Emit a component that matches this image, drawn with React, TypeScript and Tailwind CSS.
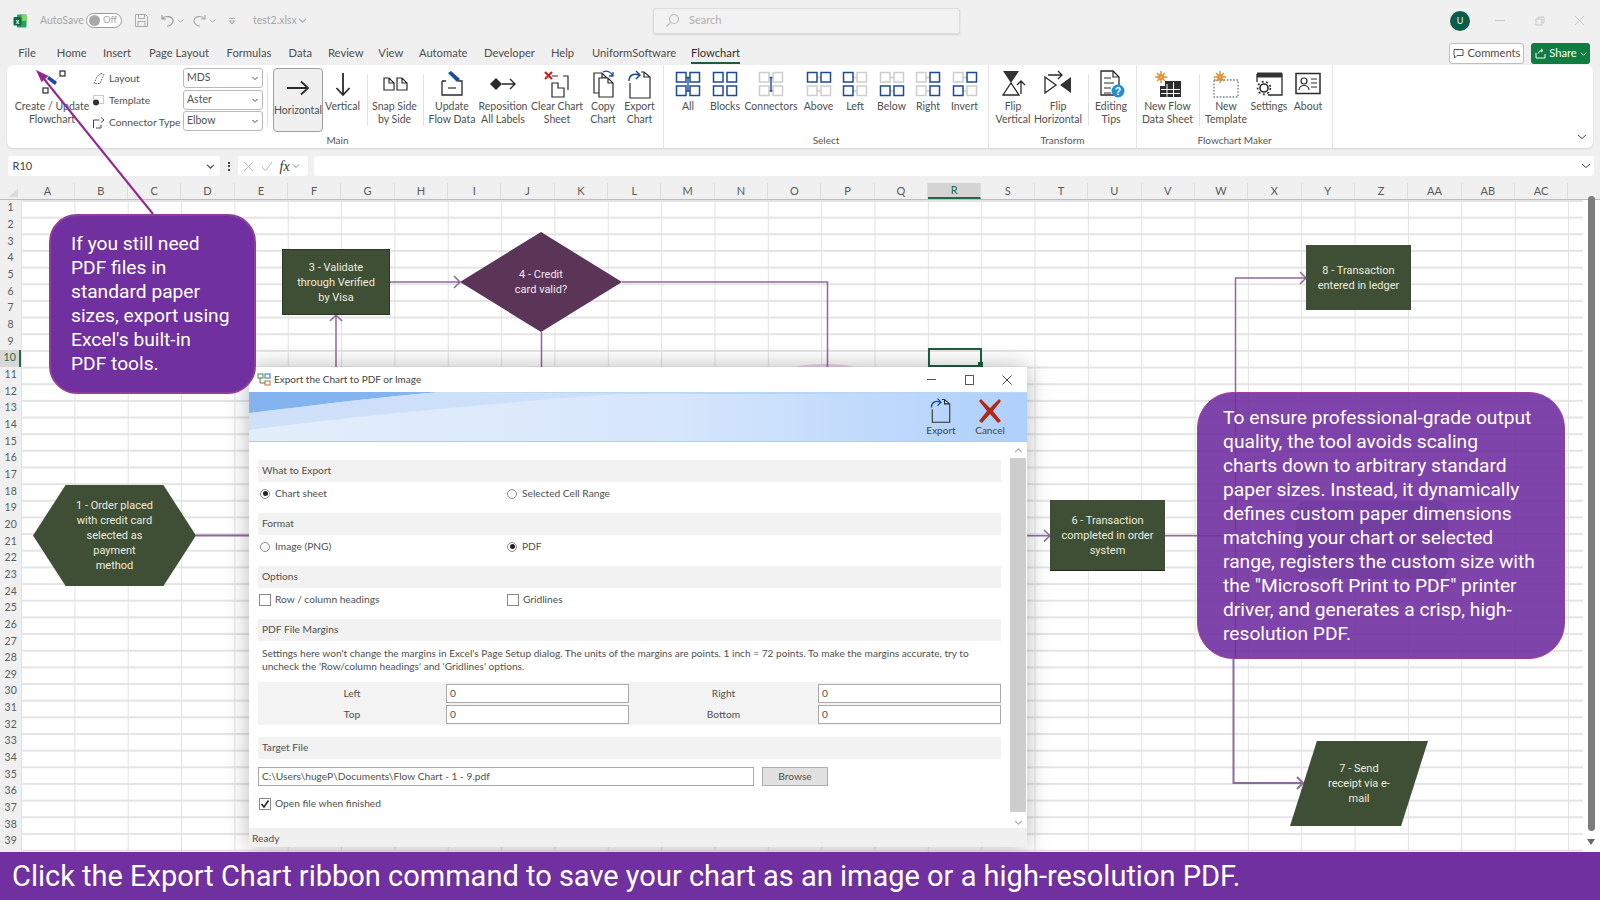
import React from "react";

const B = "#1e4a9a";
const G = "#cdcdcd";
const K = "#2a2a2a";

function Ico({ children, s = 32 }: { children: React.ReactNode; s?: number }) {
  return (
    <svg width={s} height={s} viewBox="0 0 32 32" fill="none" className="shrink-0">
      {children}
    </svg>
  );
}

function Sel({ q, h = B, v = "none" }: { q: string[]; h?: string; v?: string }) {
  const p: [number, number][] = [[4.5, 4.5], [18, 4.5], [4.5, 18], [18, 18]];
  return (
    <Ico>
      {h !== "none" && <path d="M14 9.5h4M14 23h4" stroke={h} strokeWidth="1.4" />}
      {v !== "none" && <path d="M16 9.5V23" stroke={v} strokeWidth="1.4" />}
      {p.map((c, i) => (
        <rect key={i} x={c[0]} y={c[1]} width="9.5" height="9.5" fill="#fff" stroke={q[i]} strokeWidth="1.5" />
      ))}
    </Ico>
  );
}

const Doc = ({ x = 0, y = 0, w = 14, h = 18 }: { x?: number; y?: number; w?: number; h?: number }) => (
  <path d={`M${x} ${y}h${w - 5}l5 5v${h - 5}h-${w}z M${x + w - 5} ${y}v5h5`} stroke={K} strokeWidth="1.2" fill="#fff" />
);

const Star = ({ x, y }: { x: number; y: number }) => (
  <g stroke="#e08a2c" strokeWidth="1.4">
    <path d={`M${x - 6} ${y}h12M${x} ${y - 6}v12M${x - 4} ${y - 4}l8 8M${x + 4} ${y - 4}l-8 8`} />
    <circle cx={x} cy={y} r="2" fill="#f3b04d" />
  </g>
);

const icons: Record<string, React.ReactNode> = {
  create: (
    <Ico>
      <rect x="24" y="3" width="5" height="5" stroke={K} strokeWidth="1.2" />
      <rect x="7" y="20" width="5" height="5" stroke={K} strokeWidth="1.2" />
      <path d="M12 20L24 8" stroke="#bbb" strokeDasharray="2 1" />
      <path d="M13 8l8 6-2 3-8-6z" fill={B} />
    </Ico>
  ),
  horizontal: (
    <Ico>
      <path d="M5 16h21M19 9.5l7 6.5-7 6.5" stroke={K} strokeWidth="1.8" />
    </Ico>
  ),
  vertical: (
    <Ico>
      <path d="M16 5v22M9.5 20l6.5 7 6.5-7" stroke={K} strokeWidth="1.8" />
    </Ico>
  ),
  snap: (
    <Ico>
      <Doc x={5} y={10} w={10} h={12} />
      <Doc x={18} y={10} w={10} h={12} />
    </Ico>
  ),
  update: (
    <Ico>
      <path d="M6 13v14h20V13h-4M6 13h4" stroke={K} strokeWidth="1.3" />
      <path d="M12 20h8" stroke={K} strokeWidth="1.2" />
      <path d="M12 5l3-2 9 8-3 3z" fill={B} />
    </Ico>
  ),
  repos: (
    <Ico>
      <path d="M3 16l6-6 6 6-6 6z" fill={K} />
      <path d="M15 16h13M23 11l5 5-5 5" stroke={K} strokeWidth="1.4" />
    </Ico>
  ),
  clear: (
    <Ico>
      <path d="M11 8h6M22 8h5v14M11 15v14h12v-9h-6v-5z" stroke={K} strokeWidth="1.2" />
      <path d="M4 4l7 7M11 4l-7 7" stroke="#c0281c" strokeWidth="2.2" />
    </Ico>
  ),
  copy: (
    <Ico>
      <Doc x={7} y={5} w={13} h={20} />
      <Doc x={12} y={10} w={14} h={19} />
      <path d="M16 4c4-2 8 0 10 4M26 4v4h-4" stroke={B} strokeWidth="1.3" />
    </Ico>
  ),
  exportc: (
    <Ico>
      <path d="M6 15v15h20V9l-6-5h-3M20 4v5h6" stroke={K} strokeWidth="1.2" />
      <path d="M5 13c0-6 5-8 10-6M12 3l4 4-4 4" stroke={B} strokeWidth="1.5" />
    </Ico>
  ),
  flipv: (
    <Ico>
      <path d="M6 3h16L14 15z" fill="#333" />
      <path d="M14 15l8 12H6z" stroke={K} strokeWidth="1.3" fill="#fff" />
      <path d="M24 26V13M20 17l4-4 4 4" stroke={K} strokeWidth="1.3" />
    </Ico>
  ),
  fliph: (
    <Ico>
      <path d="M3 9v16l11-8z" stroke={K} strokeWidth="1.3" fill="#fff" />
      <path d="M29 9v16l-11-8z" fill="#333" />
      <path d="M6 7h14M16 3l4 4-4 4" stroke={K} strokeWidth="1.3" />
    </Ico>
  ),
  tips: (
    <Ico>
      <path d="M6 3h12l6 6v18H6z" stroke={K} strokeWidth="1.3" fill="#fff" />
      <path d="M18 3v6h6M9 10h7M9 15h10M9 20h7M9 25h7" stroke={K} strokeWidth="1.2" />
      <circle cx="23" cy="23" r="6.5" fill="#1f8fd6" />
      <text x="23" y="27" textAnchor="middle" fontSize="10" fontWeight="700" fill="#fff" fontFamily="Liberation Sans">?</text>
    </Ico>
  ),
  newflow: (
    <Ico>
      <Star x={9} y={9} />
      <path d="M13 13h16v16H8V18h5z" fill="#2d2d2d" />
      <path d="M9 21.5h19M9 25.5h19M15 16v13M21.5 14v15" stroke="#fff" strokeWidth="1" />
    </Ico>
  ),
  newtemp: (
    <Ico>
      <rect x="4" y="12" width="24" height="17" stroke="#777" strokeWidth="1.3" strokeDasharray="1.6 1.6" />
      <Star x={10} y={9} />
    </Ico>
  ),
  settings: (
    <Ico>
      <path d="M4 6h25v21H15" stroke={K} strokeWidth="1.3" />
      <path d="M4 4.5h25v5H4z" fill="#333" />
      <path d="M4 6v8" stroke={K} strokeWidth="1.3" />
      <circle cx="11" cy="20" r="4" stroke={K} strokeWidth="1.6" />
      <circle cx="11" cy="20" r="6.4" stroke={K} strokeWidth="1.6" strokeDasharray="2 2.5" />
    </Ico>
  ),
  about: (
    <Ico>
      <rect x="4" y="5.5" width="24" height="20" stroke={K} strokeWidth="1.5" />
      <circle cx="12" cy="13" r="3" stroke={K} strokeWidth="1.2" />
      <path d="M7 22c0-6 10-6 10 0M19 11h6M19 15h6M19 19h6" stroke={K} strokeWidth="1.2" />
    </Ico>
  ),
};

function Btn({ w, lines, icon }: { w: string; lines: string[]; icon: string | React.ReactNode }) {
  return (
    <div className={`${w} flex flex-col items-center pt-[3px] shrink-0`}>
      <div className="h-[32px] flex items-center justify-center">{typeof icon === "string" ? icons[icon] : icon}</div>
      <div className="flex flex-col items-center text-[10.5px] leading-[13.4px] text-[#505050] whitespace-nowrap">
        {lines.map((l) => (
          <span key={l}>{l}</span>
        ))}
      </div>
    </div>
  );
}

const InnerSep = ({ cls }: { cls: string }) => <div className={`${cls} w-px h-[52px] mt-[9px] bg-[#e2e2e2] shrink-0`} />;

function Group({ cls, row = "", label, children }: { cls: string; row?: string; label: string; children: React.ReactNode }) {
  return (
    <div className={`${cls} flex flex-col shrink-0 border-r border-[#e4e4e4]`}>
      <div className={`${row} h-[67px] flex`}>{children}</div>
      <div className="h-[16px] flex items-center justify-center text-[10px] text-[#555]">{label}</div>
    </div>
  );
}

function Drop({ t }: { t: string }) {
  return (
    <div className="h-[20px] w-[80px] flex items-center justify-between border border-[#b9b9b9] rounded-[3px] bg-white pl-[3px] pr-[3px] text-[10.5px] text-[#505050]">
      <span>{t}</span>
      <svg width="8" height="8" viewBox="0 0 8 8"><path d="M1.5 3L4 5.5 6.5 3" stroke="#444" fill="none" /></svg>
    </div>
  );
}

const tabs: [string, string][] = [
  ["File", "w-[38.5px]"], ["Home", "w-[46.2px]"], ["Insert", "w-[46px]"], ["Page Layout", "w-[77.6px]"],
  ["Formulas", "w-[62px]"], ["Data", "w-[39.4px]"], ["Review", "w-[50.4px]"], ["View", "w-[40.6px]"],
  ["Automate", "w-[65px]"], ["Developer", "w-[67px]"], ["Help", "w-[41px]"], ["UniformSoftware", "w-[99px]"],
];

const cols = ["A","B","C","D","E","F","G","H","I","J","K","L","M","N","O","P","Q","R","S","T","U","V","W","X","Y","Z","AA","AB","AC"];
const rows = Array.from({ length: 39 }, (_, i) => i + 1);

function SectionHead({ t }: { t: string }) {
  return <div className="h-[22px] flex items-center pl-[4px] bg-[#f2f2f2] text-[10.2px] text-[#505050]">{t}</div>;
}

function Radio({ t, on, cls }: { t: string; on?: boolean; cls: string }) {
  return (
    <div className={`${cls} flex items-center gap-[5px] text-[10.2px] text-[#505050]`}>
      <span className="w-[10px] h-[10px] rounded-full border border-[#8a8a8a] flex items-center justify-center bg-white">
        {on && <span className="w-[5px] h-[5px] rounded-full bg-[#222]" />}
      </span>
      {t}
    </div>
  );
}

function Check({ t, on, cls }: { t: string; on?: boolean; cls: string }) {
  return (
    <div className={`${cls} flex items-center gap-[4px] text-[10.2px] text-[#505050]`}>
      <span className="w-[12px] h-[12px] border border-[#8a8a8a] flex items-center justify-center bg-white">
        {on && (
          <svg width="10" height="10" viewBox="0 0 10 10"><path d="M1.5 5l2.5 3L8.5 1.5" stroke="#222" strokeWidth="1.6" fill="none" /></svg>
        )}
      </span>
      {t}
    </div>
  );
}

const Input = ({ t }: { t: string }) => (
  <div className="h-[19px] border border-[#a9a9a9] bg-white pl-[3px] flex items-center text-[10.2px] text-[#505050]">{t}</div>
);

export default function App() {
  return (
    <div className="relative w-[1600px] h-[900px] overflow-hidden bg-[#f0f0f0] flex flex-col font-['Lato',sans-serif]">
      {/* title bar */}
      <div className="h-[41px] shrink-0 flex items-center text-[10.5px] text-[#a6a6a6]">
        <svg width="14" height="14" viewBox="0 0 14 14" className="ml-[13px]">
          <rect x="4" y="0.5" width="9.5" height="13" rx="1" fill="#21a366" />
          <rect x="8.5" y="0.5" width="5" height="6.5" fill="#7fd35b" />
          <rect x="0.5" y="3" width="8" height="8.5" rx="1" fill="#0f6b3a" />
          <text x="4.5" y="9.6" textAnchor="middle" fontSize="6.5" fontWeight="700" fill="#fff" fontFamily="Liberation Sans">x</text>
        </svg>
        <span className="ml-[13px] w-[46px]">AutoSave</span>
        <div className="w-[36px] h-[15px] rounded-full border border-[#9b9b9b] bg-white flex items-center pl-[2px] gap-[3px] text-[9.5px]">
          <span className="w-[11px] h-[11px] rounded-full bg-[#a9a9a9]" />
          Off
        </div>
        <svg width="15" height="15" viewBox="0 0 15 15" className="ml-[12px]" fill="none" stroke="#aaa">
          <path d="M1.5 1.5h10l2 2v10h-12zM4.5 1.5v4h6v-4M4 13.5v-5h7v5" />
        </svg>
        <svg width="17" height="15" viewBox="0 0 17 15" className="ml-[10px]" fill="none" stroke="#999" strokeWidth="1.2">
          <path d="M3 2v4h4M3 6c3-4 11-3 11 2 0 3-3 5-6 5" />
        </svg>
        <svg width="7" height="7" viewBox="0 0 8 8" className="ml-[1px]"><path d="M1 3l3 3 3-3" stroke="#aaa" fill="none" /></svg>
        <svg width="17" height="15" viewBox="0 0 17 15" className="ml-[7px]" fill="none" stroke="#aaa" strokeWidth="1.2">
          <path d="M14 2v4h-4M14 6C11 2 3 3 3 8c0 3 3 5 6 5" />
        </svg>
        <svg width="7" height="7" viewBox="0 0 8 8" className="ml-[1px]"><path d="M1 3l3 3 3-3" stroke="#aaa" fill="none" /></svg>
        <svg width="8" height="8" viewBox="0 0 8 8" className="ml-[12px]"><path d="M1 1.5h6M1.5 4l2.5 3 2.5-3z" stroke="#aaa" fill="none" /></svg>
        <span className="ml-[17px] w-[40px]">test2.xlsx</span>
        <svg width="9" height="9" viewBox="0 0 8 8" className="ml-[5px]"><path d="M1 2.5l3 3 3-3" stroke="#aaa" fill="none" /></svg>
        <div className="ml-[346px] w-[307px] h-[26px] border border-[#dcdcdc] rounded-[3px] bg-[#f2f2f2] shadow-[0_1px_2px_rgba(0,0,0,0.12)] flex items-center pl-[11px] gap-[9px] text-[11px] text-[#b0b0b0]">
          <svg width="15" height="15" viewBox="0 0 15 15" fill="none" stroke="#bbb" strokeWidth="1.2"><circle cx="9" cy="6" r="4.5" /><path d="M5.8 9.2L1.5 13.5" /></svg>
          Search
        </div>
        <div className="ml-[490px] w-[20px] h-[20px] rounded-full bg-[#0c5c4c] flex items-center justify-center text-[9px] text-[#dff]">U</div>
        <div className="ml-[25px] w-[10px] h-px bg-[#c8c8c8]" />
        <svg width="10" height="10" viewBox="0 0 10 10" className="ml-[30px]" fill="none" stroke="#c8c8c8"><path d="M1 3h6v6H1zM3 3V1h6v6H7" /></svg>
        <svg width="11" height="11" viewBox="0 0 11 11" className="ml-[29px]" stroke="#c8c8c8"><path d="M1 1l9 9M10 1l-9 9" /></svg>
      </div>

      {/* tabs row */}
      <div className="h-[24px] shrink-0 flex items-center pl-[18.3px] text-[11.2px] text-[#4e4e4e]">
        {tabs.map(([t, w]) => (
          <span key={t} className={`${w} shrink-0 whitespace-nowrap`}>{t}</span>
        ))}
        <span className="relative w-[49px] flex justify-center text-[#2f2f2f]">
          Flowchart
          <span className="absolute left-0 right-0 -bottom-[3px] h-[2px] bg-[#1f5c3d]" />
        </span>
        <div className="ml-[709.5px] w-[75px] h-[21px] border border-[#bdbdbd] rounded-[3px] bg-white flex items-center justify-center gap-[3px]">
          <svg width="11" height="11" viewBox="0 0 11 11" fill="none" stroke="#555"><path d="M1 1.5h9v6H4L1.5 10V7.5H1z" /></svg>
          Comments
        </div>
        <div className="ml-[7px] w-[59px] h-[21px] rounded-[3px] bg-[#107c41] text-white flex items-center justify-center gap-[3px]">
          <svg width="11" height="11" viewBox="0 0 11 11" fill="none" stroke="#fff"><path d="M1 5v5h9V6M3 5.5C4 3 6 2.5 7 2.5M6 .8l2 1.7-2 1.7" /></svg>
          Share
          <svg width="7" height="7" viewBox="0 0 8 8"><path d="M1 3l3 3 3-3" stroke="#fff" fill="none" /></svg>
        </div>
      </div>

      {/* ribbon */}
      <div className="h-[83px] shrink-0 ml-[7px] w-[1586px] rounded-[6px] bg-white shadow-[0_1px_2px_rgba(0,0,0,0.12)] flex pl-[5px] relative">
        <Group cls="w-[652px]" label="Main">
          <Btn w="w-[80px]" lines={["Create / Update", "Flowchart"]} icon="create" />
          <div className="w-[91px] shrink-0 flex flex-col pt-[5px] gap-[5px] text-[10.3px] text-[#505050]">
            <div className="h-[17px] flex items-center gap-[4px]">
              <svg width="13" height="13" viewBox="0 0 13 13" fill="none" stroke="#555" strokeDasharray="1.5 1.2"><path d="M9 1.5l3 1-4 9-6 0 3-7z" /></svg>
              Layout
            </div>
            <div className="h-[17px] flex items-center gap-[4px]">
              <svg width="13" height="13" viewBox="0 0 13 13" fill="none"><rect x="1.5" y="1.5" width="10" height="8" stroke="#999" strokeDasharray="1 1" /><circle cx="4" cy="8.5" r="3" fill="#333" /></svg>
              Template
            </div>
            <div className="h-[17px] flex items-center gap-[4px] whitespace-nowrap">
              <svg width="13" height="13" viewBox="0 0 13 13" fill="none" stroke="#444"><path d="M1.5 12V4h6M9 1.5l3 2.5-3 2.5M4 12h5V9" /></svg>
              Connector Type
            </div>
          </div>
          <div className="w-[80px] shrink-0 flex flex-col pt-[3px] gap-[1.5px]">
            <Drop t="MDS" />
            <Drop t="Aster" />
            <Drop t="Elbow" />
          </div>
          <InnerSep cls="ml-[4px]" />
          <div className="ml-[5px] w-[50px] h-[64px] mt-[3px] shrink-0 rounded-[4px] border border-[#9f9f9f] bg-[#f0f0f0]">
            <Btn w="w-[48px]" lines={["Horizontal"]} icon="horizontal" />
          </div>
          <Btn w="w-[39px]" lines={["Vertical"]} icon="vertical" />
          <InnerSep cls="ml-[5px]" />
          <Btn w="ml-[4px] w-[45px]" lines={["Snap Side", "by Side"]} icon="snap" />
          <InnerSep cls="ml-[6px]" />
          <Btn w="ml-[5px] w-[46px]" lines={["Update", "Flow Data"]} icon="update" />
          <Btn w="w-[56px]" lines={["Reposition", "All Labels"]} icon="repos" />
          <Btn w="w-[52px]" lines={["Clear Chart", "Sheet"]} icon="clear" />
          <Btn w="w-[40px]" lines={["Copy", "Chart"]} icon="copy" />
          <Btn w="w-[33px]" lines={["Export", "Chart"]} icon="exportc" />
        </Group>
        <Group cls="w-[325px]" row="pl-[6px]" label="Select">
          <Btn w="w-[36px]" lines={["All"]} icon={<Sel q={[B, B, B, B]} v={B} />} />
          <Btn w="w-[38px]" lines={["Blocks"]} icon={<Sel q={[B, B, B, B]} h="none" />} />
          <Btn w="w-[54px]" lines={["Connectors"]} icon={<Sel q={[G, G, G, G]} v={B} />} />
          <Btn w="w-[41px]" lines={["Above"]} icon={<Sel q={[B, B, G, G]} h={G} />} />
          <Btn w="w-[32px]" lines={["Left"]} icon={<Sel q={[B, G, B, G]} h={G} />} />
          <Btn w="w-[41px]" lines={["Below"]} icon={<Sel q={[G, G, B, B]} h={G} />} />
          <Btn w="w-[32px]" lines={["Right"]} icon={<Sel q={[G, B, G, B]} h={G} />} />
          <Btn w="w-[41px]" lines={["Invert"]} icon={<Sel q={[G, B, B, G]} h={G} />} />
        </Group>
        <Group cls="w-[148px]" label="Transform">
          <Btn w="w-[48px]" lines={["Flip", "Vertical"]} icon="flipv" />
          <Btn w="w-[42px]" lines={["Flip", "Horizontal"]} icon="fliph" />
          <InnerSep cls="ml-[9px]" />
          <Btn w="w-[44px]" lines={["Editing", "Tips"]} icon="tips" />
        </Group>
        <Group cls="w-[196px]" label="Flowchart Maker">
          <Btn w="w-[61px]" lines={["New Flow", "Data Sheet"]} icon="newflow" />
          <InnerSep cls="ml-px" />
          <Btn w="w-[52px]" lines={["New", "Template"]} icon="newtemp" />
          <Btn w="w-[34px]" lines={["Settings"]} icon="settings" />
          <Btn w="w-[44px]" lines={["About"]} icon="about" />
        </Group>
        <svg width="10" height="10" viewBox="0 0 10 10" className="absolute right-[6px] top-[67px]"><path d="M1 3l4 3.5L9 3" stroke="#444" fill="none" /></svg>
      </div>

      {/* formula bar */}
      <div className="mt-[8px] h-[20px] shrink-0 flex items-stretch pl-[7.6px] text-[11px] text-[#444]">
        <div className="w-[212px] bg-white rounded-[3px] flex items-center justify-between pl-[5px] pr-[5px]">
          R10
          <svg width="9" height="9" viewBox="0 0 8 8"><path d="M1 2.5l3 3 3-3" stroke="#444" fill="none" /></svg>
        </div>
        <div className="w-[18px] flex flex-col items-center justify-center gap-[1.5px]">
          <span className="w-[2px] h-[2px] bg-[#444]" />
          <span className="w-[2px] h-[2px] bg-[#444]" />
          <span className="w-[2px] h-[2px] bg-[#444]" />
        </div>
        <div className="w-[70px] bg-white rounded-[3px] flex items-center pl-[5px] gap-[7px]">
          <svg width="11" height="11" viewBox="0 0 11 11" stroke="#b9b9b9"><path d="M1 1l9 9M10 1l-9 9" /></svg>
          <svg width="12" height="11" viewBox="0 0 12 11" fill="none" stroke="#b9b9b9"><path d="M1 6l3.5 4L11 1" /></svg>
          <span className="font-['Liberation_Serif',serif] italic text-[14px] text-[#333]">fx</span>
          <svg width="8" height="8" viewBox="0 0 8 8" className="-ml-[5px]"><path d="M1 2.5l3 3 3-3" stroke="#888" fill="none" /></svg>
        </div>
        <div className="ml-[6px] w-[1280px] bg-white rounded-[3px] flex items-center justify-end pr-[3px]">
          <svg width="10" height="10" viewBox="0 0 10 10"><path d="M1 3l4 3.5L9 3" stroke="#444" fill="none" /></svg>
        </div>
      </div>

      {/* column headers */}
      <div className="mt-[7px] h-[17px] shrink-0 flex text-[11px] text-[#5a5a5a] border-b border-[#bdbdbd]">
        <div className="w-[21.3px] shrink-0 flex items-end justify-end pr-[3px] pb-[2px]">
          <span className="w-0 h-0 border-l-[9px] border-l-transparent border-b-[9px] border-b-[#dcdcdc]" />
        </div>
        {cols.map((c) => (
          <div
            key={c}
            className={`w-[53.35px] shrink-0 flex items-center justify-center border-r border-[#dedede] ${
              c === "R" ? "bg-[#d4d4d4] border-b-2 border-b-[#1f6b45] text-[#1f6b45]" : ""
            }`}
          >
            {c}
          </div>
        ))}
      </div>

      {/* sheet */}
      <div className="flex-1 min-h-0 flex">
        <div className="w-[21.3px] shrink-0 flex flex-col text-[10.5px] text-[#5a5a5a]">
          {rows.map((r) => (
            <div
              key={r}
              className={`h-[16.67px] shrink-0 flex items-center justify-center ${
                r === 10 ? "bg-[#d8d8d8] border-r-2 border-r-[#1f6b45] text-[#1f6b45]" : ""
              }`}
            >
              {r}
            </div>
          ))}
        </div>
        <div className="w-[1561.7px] shrink-0 bg-white bg-[linear-gradient(to_right,#e2e2e2_1px,transparent_1px),linear-gradient(to_bottom,#e4e4e4_1.5px,transparent_1.5px)] bg-[size:53.35px_16.67px]" />
        <div className="flex-1 bg-white flex flex-col items-center relative">
          <div className="mt-[-4px] w-[7px] h-[635px] rounded-full bg-[#7d7d7d]" />
          <span className="mt-[8px] w-0 h-0 border-l-[4px] border-r-[4px] border-t-[6px] border-l-transparent border-r-transparent border-t-[#666]" />
        </div>
      </div>

      {/* banner */}
      <div className="h-[48px] shrink-0 bg-[#7030a0] flex items-center pl-[12px] text-[29px] leading-none text-white font-['Roboto',sans-serif] z-10 relative">
        Click the Export Chart ribbon command to save your chart as an image or a high-resolution PDF.
      </div>

      {/* selected cell */}
      <div className="absolute left-[927.5px] top-[348px] w-[54px] h-[19px] border-2 border-[#1f5f3f]">
        <span className="absolute -right-[3px] -bottom-[2px] w-[5px] h-[5px] bg-[#1f5f3f]" />
      </div>

      {/* connectors */}
      <svg width="1600" height="900" viewBox="0 0 1600 900" className="absolute left-0 top-0 pointer-events-none" fill="none">
        <ellipse cx="825" cy="369" rx="32" ry="5" fill="#eed0ec" />
        <g stroke="#8e6a9c" strokeWidth="1.5">
          <path d="M390 282H460M454 276l6 6-6 6" />
          <path d="M336 367V315M330 321l6-6 6 6" />
          <path d="M541.5 332V367" />
          <path d="M622 282H827.5V367" />
          <path d="M196 535.5H249" strokeWidth="2" />
          <path d="M1027 535.7H1050M1044 530l6 5.7-6 5.7" />
          <path d="M1165 535.7H1235" />
          <path d="M1306 278H1235.5V659M1300 272l6 6-6 6" />
          <path d="M1233.5 659V783H1303M1297 777l6 6-6 6" strokeWidth="2" />
        </g>
      </svg>

      {/* flowchart nodes */}
      <div className="absolute left-[282px] top-[249px] w-[108px] h-[66px] bg-[#3f4f35] border border-[#2a3a22] flex items-center justify-center text-center text-[11px] leading-[15px] text-[#ececdf] font-['Roboto',sans-serif]">
        3 - Validate<br />through Verified<br />by Visa
      </div>
      <div className="absolute left-[1306px] top-[245px] w-[105px] h-[65px] bg-[#3f4f35] flex items-center justify-center text-center text-[11px] leading-[15px] text-[#ececdf] font-['Roboto',sans-serif]">
        8 - Transaction<br />entered in ledger
      </div>
      <div className="absolute left-[1050px] top-[500px] w-[115px] h-[71px] bg-[#3f4f35] border-b border-b-[#1e2b18] flex items-center justify-center text-center text-[11px] leading-[15px] text-[#ececdf] font-['Roboto',sans-serif]">
        6 - Transaction<br />completed in order<br />system
      </div>
      <div className="absolute left-[460px] top-[232px] w-[162px] h-[100px] bg-[#5a3558] [clip-path:polygon(50%_0,100%_50%,50%_100%,0_50%)] flex items-center justify-center text-center text-[11px] leading-[15px] text-[#f0e8ef] font-['Roboto',sans-serif]">
        4 - Credit<br />card valid?
      </div>
      <div className="absolute left-[33px] top-[485px] w-[163px] h-[101px] bg-[#3f4f35] [clip-path:polygon(20%_0,80%_0,100%_50%,80%_100%,20%_100%,0_50%)] flex items-center justify-center text-center text-[11px] leading-[15px] text-[#ececdf] font-['Roboto',sans-serif]">
        1 - Order placed<br />with credit card<br />selected as<br />payment<br />method
      </div>
      <div className="absolute left-[1290px] top-[741px] w-[138px] h-[85px] bg-[#3f4f35] [clip-path:polygon(19.5%_0,100%_0,80.5%_100%,0_100%)] flex items-center justify-center text-center text-[11px] leading-[15px] text-[#ececdf] font-['Roboto',sans-serif]">
        7 - Send<br />receipt via e-<br />mail
      </div>

      {/* dialog */}
      <div className="absolute left-[249px] top-[367px] w-[778px] h-[480px] bg-white shadow-[0_0_22px_rgba(0,0,0,0.28)] flex flex-col">
        <div className="h-[25px] shrink-0 flex items-center pl-[8px] text-[10px] text-[#444]">
          <svg width="14" height="14" viewBox="0 0 14 14" fill="none" strokeWidth="1">
            <rect x="1" y="1" width="5" height="4" stroke="#3d8f4a" />
            <rect x="8" y="1" width="5" height="4" stroke="#3d6fae" />
            <rect x="8" y="8" width="5" height="4" stroke="#c0702c" />
            <path d="M3 5v5h5" stroke="#666" />
          </svg>
          <span className="ml-[3px]">Export the Chart to PDF or Image</span>
          <div className="ml-auto flex items-center pr-[15px] gap-[28.5px]">
            <span className="w-[9px] h-px bg-[#555]" />
            <span className="w-[9px] h-[10px] border border-[#555]" />
            <svg width="10" height="10" viewBox="0 0 10 10" stroke="#444"><path d="M.5.5l9 9M9.5.5l-9 9" /></svg>
          </div>
        </div>
        <div className="relative h-[50px] shrink-0 border-b border-[#b7cbe4] bg-[linear-gradient(to_right,#e4eefb_0%,#d6e6fb_55%,#aed0fb_100%)] flex justify-end items-center pr-[17px] text-[10px] text-[#444] overflow-hidden">
          <svg width="778" height="50" viewBox="0 0 778 50" className="absolute left-0 top-0" preserveAspectRatio="none">
            <path d="M0 0H190C120 6 60 14 0 21Z" fill="#84b4f0" />
            <path d="M190 0H778V1C640 2 400 3 190 0Z" fill="#b8d5f8" />
            <path d="M0 21C60 14 120 6 190 0C250 2 330 2 400 0C300 6 120 22 0 38Z" fill="#c6dcf8" opacity="0.7" />
          </svg>
          <div className="relative w-[40px] flex flex-col items-center">
            <Ico s={28}>{icons.exportc}</Ico>
            <span className="mt-[-1px]">Export</span>
          </div>
          <div className="relative ml-[9px] w-[40px] flex flex-col items-center">
            <svg width="28" height="28" viewBox="0 0 28 28"><path d="M5 3l9 9 9-9 2 2-8 10 8 10-3 2-8-9-8 9-3-2 8-10-8-10z" fill="#b02a1c" /></svg>
            <span className="mt-[-1px]">Cancel</span>
          </div>
        </div>
        <div className="flex-1 min-h-0 flex">
          <div className="flex-1 min-w-0 pl-[9px] pr-[9px] pt-[18px] flex flex-col">
            <SectionHead t="What to Export" />
            <div className="h-[31px] pb-[7px] flex items-center pl-[1px]">
              <Radio t="Chart sheet" on cls="w-[248px] pl-[1px]" />
              <Radio t="Selected Cell Range" cls="" />
            </div>
            <SectionHead t="Format" />
            <div className="h-[31px] pb-[7px] flex items-center pl-[1px]">
              <Radio t="Image (PNG)" cls="w-[248px] pl-[1px]" />
              <Radio t="PDF" on cls="" />
            </div>
            <SectionHead t="Options" />
            <div className="h-[31px] pb-[7px] flex items-center pl-[1px]">
              <Check t="Row / column headings" cls="w-[248px]" />
              <Check t="Gridlines" cls="" />
            </div>
            <SectionHead t="PDF File Margins" />
            <div className="h-[41px] pl-[4px] pt-[6px] text-[10.15px] leading-[13.4px] text-[#505050] whitespace-nowrap">
              Settings here won't change the margins in Excel's Page Setup dialog. The units of the margins are points. 1 inch = 72 points. To make the margins accurate, try to<br />
              uncheck the 'Row/column headings' and 'Gridlines' options.
            </div>
            <div className="h-[43px] pt-[2px] bg-[#f3f3f3] grid grid-cols-[188px_183px_189px_183px] grid-rows-[19px_19px] gap-y-[2px] content-start text-[10.2px] text-[#505050]">
              <div className="flex items-center justify-center">Left</div>
              <Input t="0" />
              <div className="flex items-center justify-center">Right</div>
              <Input t="0" />
              <div className="flex items-center justify-center">Top</div>
              <Input t="0" />
              <div className="flex items-center justify-center">Bottom</div>
              <Input t="0" />
            </div>
            <div className="mt-[12px]"><SectionHead t="Target File" /></div>
            <div className="mt-[8px] flex gap-[8px]">
              <div className="w-[496px]"><Input t="C:\Users\hugeP\Documents\Flow Chart - 1 - 9.pdf" /></div>
              <div className="w-[66px] h-[19px] bg-[#e1e1e1] border border-[#adadad] flex items-center justify-center text-[10.2px] text-[#505050]">Browse</div>
            </div>
            <div className="mt-[9px] h-[18px] flex items-center pl-[1px]">
              <Check t="Open file when finished" on cls="" />
            </div>
          </div>
          <div className="w-[16px] shrink-0 flex flex-col items-center bg-white mr-[1px]">
            <svg width="9" height="9" viewBox="0 0 8 8" className="mt-[4px] mb-[3px]"><path d="M1 5.5l3-3 3 3" stroke="#aaa" fill="none" /></svg>
            <div className="w-full h-[354px] bg-[#cdcdcd]" />
            <svg width="9" height="9" viewBox="0 0 8 8" className="mt-[6px]"><path d="M1 2.5l3 3 3-3" stroke="#aaa" fill="none" /></svg>
          </div>
        </div>
        <div className="h-[19px] shrink-0 bg-[#f0f0f0] flex items-center pl-[3px] pt-[2px] text-[10.2px] text-[#505050]">Ready</div>
      </div>

      {/* callouts */}
      <div className="absolute left-[49px] top-[214px] w-[207px] h-[180px] rounded-[28px] bg-[#7030a0] border-2 border-[#8f3f98] pl-[20px] pt-[16px] text-[19.2px] leading-[24.1px] text-white font-['Roboto',sans-serif] whitespace-nowrap">
        If you still need<br />PDF files in<br />standard paper<br />sizes, export using<br />Excel's built-in<br />PDF tools.
      </div>
      <div className="absolute left-[1197px] top-[392px] w-[368px] h-[267px] rounded-[36px] bg-[#7030a0]/90 border border-[#9a3f9c] pl-[25px] pt-[13px] text-[19.2px] leading-[24px] text-white font-['Roboto',sans-serif] whitespace-nowrap">
        <div className="absolute left-[98px] top-[108px] w-[152px] h-[78px] rounded-[10px] bg-[#5a2a8a]/25" />
        <div className="relative">
          To ensure professional-grade output<br />quality, the tool avoids scaling<br />charts down to arbitrary standard<br />paper sizes. Instead, it dynamically<br />defines custom paper dimensions<br />matching your chart or selected<br />range, registers the custom size with<br />the "Microsoft Print to PDF" printer<br />driver, and generates a crisp, high-<br />resolution PDF.
        </div>
      </div>

      {/* pointer arrow */}
      <svg width="170" height="160" viewBox="0 0 170 160" className="absolute left-0 top-[60px] pointer-events-none" fill="none">
        <path d="M153 154L40 14" stroke="#93278f" strokeWidth="2" />
        <path d="M36 10l12.5 6-7 6z" fill="#93278f" />
      </svg>
    </div>
  );
}
